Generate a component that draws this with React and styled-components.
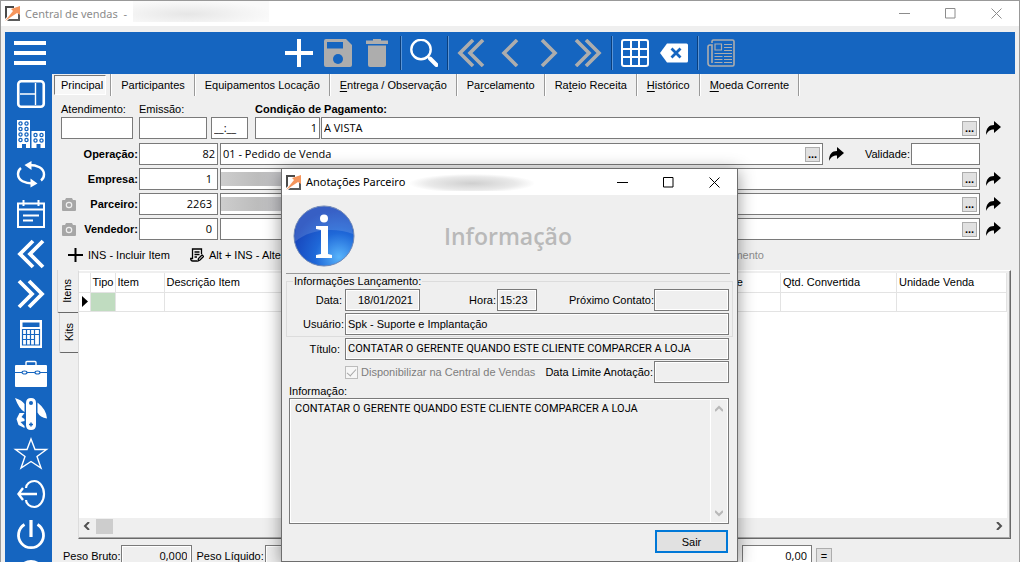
import React, { useState } from 'react';
import styled, { createGlobalStyle } from 'styled-components';

const GlobalStyle = createGlobalStyle`
  * {
    box-sizing: border-box;
  }

  body {
    margin: 0;
    overflow: hidden;
    background: #efefef;
    color: #000;
    font: 11px/14px 'Liberation Sans', Arial, sans-serif;
  }

  button,
  input,
  textarea {
    font: inherit;
    color: inherit;
    border-radius: 0;
  }

  svg {
    display: block;
  }
`;

const Window = styled.main`
  display: flex;
  flex-direction: column;
  position: relative;
  height: 100vh;
  overflow: hidden;
  border: 1px solid #999;
  border-bottom: 0;
  padding: 0 4px;
`;

const TitleBar = styled.header`
  display: flex;
  align-items: center;
  flex: none;
  height: ${(p) => (p.$main ? 25 : 26)}px;
  margin: ${(p) => (p.$main ? '0 -4px 6px' : '0')};
  padding-left: 3px;
  background: #fff;
  color: ${(p) => (p.$main ? '#8c8c8c' : '#000')};
  font: 11px/16px 'Noto Sans', 'Open Sans', sans-serif;
`;

const TitleText = styled.h1`
  margin: 0 0 0 4px;
  font: inherit;
  white-space: pre;
`;

const Smudge = styled.span`
  flex: none;
  align-self: ${(p) => (p.$top ? 'flex-start' : 'center')};
  width: ${(p) => p.$width}px;
  height: ${(p) => p.$height}px;
  margin-left: ${(p) => p.$gap || 0}px;
  background: ${(p) => p.$fill};
`;

const WindowControls = styled.div`
  display: flex;
  margin-left: auto;
`;

const ControlButton = styled.button`
  display: grid;
  place-items: center;
  width: 46px;
  height: 24px;
  padding: 0;
  border: 0;
  background: none;
`;

const Toolbar = styled.nav`
  display: grid;
  grid-template-columns: 1fr auto 1fr;
  align-items: center;
  flex: none;
  height: 42px;
  background: #1565c0;
  color: #fff;
`;

const ToolGroup = styled.div`
  display: flex;
  align-items: center;
`;

const ToolButton = styled.button`
  display: grid;
  place-items: center;
  width: ${(p) => (p.$menu ? 50 : 39)}px;
  height: 40px;
  padding: 0;
  border: 0;
  background: none;
  color: ${(p) => (p.disabled ? '#adadad' : '#fff')};
`;

const ToolDivider = styled.span`
  width: 2px;
  height: 34px;
  margin: 0 3px;
  background: #0b3f7c;
  border-right: 1px solid #5b95d6;
`;

const Body = styled.div`
  display: flex;
  flex: 1;
  min-height: 0;
`;

const Sidebar = styled.nav`
  display: flex;
  flex-direction: column;
  flex: none;
  width: 47px;
  overflow: hidden;
  background: #1565c0;
`;

const SideButton = styled.button`
  display: grid;
  place-items: center;
  flex: none;
  width: 52px;
  height: 40px;
  padding: 0;
  border: 0;
  background: none;
  color: #fff;
`;

const Content = styled.section`
  display: flex;
  flex-direction: column;
  flex: 1;
  min-width: 0;
`;

const Tabs = styled.div`
  display: flex;
  flex: none;
  height: 22px;
  padding-left: 2px;
`;

const Tab = styled.button`
  height: 22px;
  padding: 0 9px 1px 10px;
  border: 0;
  border-right: 1px solid #999;
  box-shadow: 1px 0 #fff;
  background: none;
  white-space: nowrap;

  u {
    text-underline-offset: 2px;
  }
`;

const ActiveTab = styled.div`
  height: 22px;
  padding: 1px 4px 0 0;
  border-right: 1px solid #999;
  box-shadow: 1px 0 #fff;

  button {
    height: 20px;
    padding: 0 2px 0 6px;
    border: 1px solid;
    border-color: #777 #fff #fff #777;
    background: #f7f7f7;
  }
`;

const Form = styled.form`
  display: flex;
  flex-direction: column;
  flex: none;
  gap: 3px;
  padding: 4px 9px 0 5px;
`;

const HeadRow = styled.div`
  display: flex;
  align-items: flex-end;
  margin-bottom: 1px;
  padding-left: 4px;
`;

const Group = styled.div`
  display: flex;
  flex-direction: column;
  flex: ${(p) => (p.$grow ? '1' : 'none')};
  width: ${(p) => (p.$width ? `${p.$width}px` : 'auto')};
  margin-right: ${(p) => p.$gap || 0}px;
`;

const Row = styled.div`
  display: flex;
  align-items: center;
`;

const TopLabel = styled.label`
  height: 17px;
  padding-top: 2px;
  font-weight: ${(p) => (p.$bold ? 'bold' : 'normal')};
  white-space: nowrap;
`;

const SideLabel = styled.div`
  display: flex;
  align-items: center;
  justify-content: space-between;
  flex: none;
  width: ${(p) => p.$width || 82}px;
  padding: 0 1px 0 5px;
  font-weight: ${(p) => (p.$light ? 'normal' : 'bold')};
  white-space: nowrap;

  label {
    margin-left: auto;
  }
`;

const fieldFonts = {
  main: "'Open Sans', 'Noto Sans', sans-serif",
  plain: 'inherit',
  narrow: 'Roboto, sans-serif',
};

const Input = styled.input`
  flex: ${(p) => (p.$width ? 'none' : '1')};
  width: ${(p) => (p.$width ? `${p.$width}px` : 'auto')};
  min-width: 0;
  height: 22px;
  margin-right: ${(p) => p.$gap || 0}px;
  padding: 0 ${(p) => p.$end || 2}px 1px 2px;
  border: 1px solid #7a7a7a;
  outline: 0;
  background: ${(p) => (p.$flat ? '#efefef' : '#fff')};
  box-shadow: inset 0 0 0 1px #fff;
  text-align: ${(p) => p.$align || 'left'};
  font-family: ${(p) => fieldFonts[p.$face || 'main']};
`;

const LookupBox = styled.div`
  display: flex;
  align-items: center;
  flex: 1;
  min-width: 0;
  height: 22px;
  padding-right: 2px;
  border: 1px solid #7a7a7a;
  background: #fff;

  input {
    height: 18px;
    border: 0;
    box-shadow: none;
  }
`;

const DotsButton = styled.button`
  flex: none;
  width: 15px;
  height: 15px;
  padding: 0;
  border: 1px solid #adadad;
  background: #e1e1e1;
  font-weight: bold;
  line-height: 12px;
`;

const ShareButton = styled.button`
  display: grid;
  place-items: center;
  flex: none;
  width: 26px;
  height: 22px;
  padding: 0;
  border: 0;
  background: none;
`;

const ShareSpace = styled.span`
  width: 26px;
`;

const Actions = styled.div`
  display: grid;
  grid-template-columns: 122px 1fr auto;
  align-items: center;
  flex: none;
  height: 30px;
  padding: 0 251px 0 16px;
`;

const ActionButton = styled.button`
  display: flex;
  align-items: center;
  gap: 5px;
  padding: 0;
  border: 0;
  background: none;
  color: ${(p) => (p.disabled ? '#8c8c8c' : '#000')};
  white-space: nowrap;
`;

const GridArea = styled.div`
  display: flex;
  flex: none;
  height: 269px;
  padding: 0 4px 0 5px;
`;

const VerticalTabs = styled.div`
  display: flex;
  flex-direction: column;
  align-items: flex-end;
  width: 21px;
`;

const VerticalTab = styled.button`
  width: ${(p) => (p.$active ? 21 : 19)}px;
  height: ${(p) => (p.$active ? 43 : 40)}px;
  padding: 6px 2px;
  border: 0;
  border-left: 1px solid #d8d8d8;
  border-bottom: 1px solid #696969;
  border-radius: 0 0 0 2px;
  background: none;
  text-align: left;

  span {
    display: block;
    writing-mode: vertical-rl;
    transform: rotate(180deg);
  }
`;

const GridPanel = styled.div`
  display: flex;
  flex-direction: column;
  flex: 1;
  min-width: 0;
  padding: 2px 2px 0 0;
  border: 1px solid;
  border-color: #fff #696969 #696969 #dcdcdc;
  box-shadow: inset -1px -1px #a8a8a8;
`;

const TableWrap = styled.div`
  flex: 1;
  margin-right: 1px;
  overflow: hidden;
  background: #fff;
`;

const Table = styled.table`
  width: 100%;
  border-collapse: collapse;
  table-layout: fixed;

  th,
  td {
    height: 19px;
    padding: 0 2px;
    border: 1px solid #e3e3e3;
    border-width: 0 1px 1px 0;
    font-weight: normal;
    text-align: left;
    white-space: nowrap;
  }

  th:first-child,
  td:first-child {
    padding: 0;
  }
`;

const TypeCell = styled.td`
  background: #c0dcc0;
`;

const HScroll = styled.div`
  display: flex;
  align-items: center;
  height: 20px;
  padding: 0 5px 4px 4px;
  color: #505050;
`;

const HThumb = styled.span`
  width: 17px;
  height: 15px;
  margin: 0 auto 0 5px;
  background: #cdcdcd;
`;

const Footer = styled.footer`
  display: flex;
  align-items: center;
  flex: none;
  height: 22px;
  margin-top: 6px;
  padding: 0 183px 0 11px;

  label {
    padding-right: 1px;
  }
`;

const FooterTotal = styled.div`
  display: flex;
  align-items: center;
  margin-left: auto;
  gap: 4px;
`;

const EqualButton = styled.button`
  width: 16px;
  height: 16px;
  padding: 0;
  border: 1px solid #adadad;
  background: #e1e1e1;
  line-height: 12px;
`;

/* Partner notes dialog */

const Dialog = styled.section`
  position: absolute;
  top: 167px;
  left: calc(50% - 229px);
  width: 457px;
  border: 1px solid #6e6e6e;
  background: #efefef;
  box-shadow: 0 3px 16px rgba(0, 0, 0, 0.42);
`;

const DialogHead = styled.div`
  display: grid;
  grid-template-columns: 62px 1fr 62px;
  align-items: center;
  height: 79px;
  margin: 0 7px 1px 4px;
  padding: 4px 7px 0;
  border-bottom: 1px solid #999;
`;

const Heading = styled.h2`
  margin: 0;
  color: #b9b9b9;
  font: 600 23px/28px 'Open Sans', 'Noto Sans', sans-serif;
  text-align: center;
`;

const Fieldset = styled.fieldset`
  display: flex;
  flex-direction: column;
  gap: 2px;
  min-width: 0;
  margin: 0 4px 1px;
  padding: 2px 3px 1px 0;
  border: 1px solid #dcdcdc;

  legend {
    margin-left: 6px;
    padding: 0 1px;
    line-height: 12px;
  }
`;

const DialogRow = styled.div`
  display: flex;
  align-items: center;
  margin: 0 ${(p) => (p.$outer ? 8 : 0)}px ${(p) => (p.$outer ? 1 : 0)}px ${(p) => (p.$outer ? 5 : 0)}px;
`;

const FieldLabel = styled.label`
  flex: ${(p) => (p.$width ? 'none' : '1')};
  width: ${(p) => (p.$width ? `${p.$width}px` : 'auto')};
  padding-right: ${(p) => p.$end || 0}px;
  text-align: right;
  white-space: nowrap;
`;

const CheckLabel = styled.label`
  display: flex;
  align-items: center;
  gap: 3px;
  margin-left: 58px;
  color: #7d7d7d;
  white-space: nowrap;

  input {
    appearance: none;
    position: relative;
    width: 13px;
    height: 13px;
    margin: 0;
    border: 1px solid #bcbcbc;
    background: #f6f6f6;
  }

  input:checked::after {
    content: '';
    position: absolute;
    left: 3px;
    top: 0;
    width: 4px;
    height: 8px;
    border: solid #a8a8a8;
    border-width: 0 1px 1px 0;
    transform: rotate(42deg);
  }
`;

const MemoLabel = styled.label`
  display: block;
  margin-left: 7px;
`;

const Memo = styled.div`
  display: flex;
  height: 126px;
  margin: 0 8px 6px 7px;
  border: 1px solid #7a7a7a;
  box-shadow: inset 0 0 0 1px #fff;

  textarea {
    flex: 1;
    padding: 3px 5px;
    border: 0;
    outline: 0;
    resize: none;
    background: none;
    font-family: ${fieldFonts.narrow};
  }
`;

const VScroll = styled.div`
  display: flex;
  flex-direction: column;
  align-items: center;
  justify-content: space-between;
  width: 18px;
  padding: 6px 2px 6px 0;
  border-left: 1px solid #fff;
  color: #b8b8b8;
`;

const CloseButton = styled.button`
  display: block;
  width: 73px;
  height: 23px;
  margin: 0 9px 8px auto;
  padding: 0;
  border: 2px solid #0078d7;
  background: #e1e1e1;
`;

const Icon = ({ size = 28, children, ...rest }) => (
  <svg width={size} height={size} viewBox="0 0 28 28" fill="none" stroke="currentColor" strokeWidth="2" {...rest}>
    {children}
  </svg>
);

const toolIcons = {
  add: <path d="M14 0v28M0 14h28" strokeWidth="4" />,
  save: (
    <>
      <path d="M2 0h20l6 6v20a2 2 0 0 1-2 2H2a2 2 0 0 1-2-2V2a2 2 0 0 1 2-2z" fill="currentColor" stroke="none" />
      <path d="M3 3h16v6.500H3z" fill="#1565c0" stroke="none" />
      <circle cx="14" cy="20" r="5" fill="#1565c0" stroke="none" />
    </>
  ),
  trash: (
    <path d="M10 0h8v1.500h7V5H3V1.500h7zM5 6.500h18V26a2 2 0 0 1-2 2H7a2 2 0 0 1-2-2z" fill="currentColor" stroke="none" />
  ),
  search: (
    <>
      <circle cx="11" cy="10.500" r="9.700" strokeWidth="2.400" />
      <path d="M18 17.500l3 3" />
      <path d="M20 19.500l6.500 6.500" strokeWidth="4" strokeLinecap="round" />
    </>
  ),
  first: <path d="M16 1L3 14l13 13M26 1L13 14l13 13" strokeWidth="3.600" />,
  prev: <path d="M21 1L8 14l13 13" strokeWidth="3.600" />,
  next: <path d="M7 1l13 13L7 27" strokeWidth="3.600" />,
  last: <path d="M2 1l13 13L2 27M12 1l13 13-13 13" strokeWidth="3.600" />,
  table: (
    <>
      <rect x="1" y="1" width="26" height="26" rx="2" />
      <path d="M10 1v26M18 1v26M1 10h26M1 18h26" />
    </>
  ),
  erase: (
    <>
      <path d="M0 14L7 4.500h19.500Q28 4.500 28 6v16q0 1.500-1.500 1.500H7z" fill="currentColor" stroke="none" />
      <path d="M11.500 9.500l9 9M20.500 9.500l-9 9" stroke="#1565c0" strokeWidth="2.800" />
    </>
  ),
  news: (
    <>
      <path d="M5 4V2.500Q5 1 6.500 1h19Q27 1 27 2.500v23q0 1.500-1.500 1.500H4q-3 0-3-3V8q0-2 2-2h2v18" strokeWidth="1.600" />
      <path d="M8 5h6.500v6H8zM17 5.500h8M17 8.500h8M17 11.500h8M7.500 14.500H25M7.500 17.500h8M17 17.500h8M7.500 20.500h8M17 20.500h8M7.500 23.500h8M17 23.500h8" strokeWidth="1.200" />
    </>
  ),
};

const sideIcons = {
  layout: (
    <>
      <rect x="1.250" y="1.250" width="25.500" height="25.500" rx="3" strokeWidth="2.600" />
      <path d="M3 14h15.500M18.500 3v22" strokeWidth="1.400" />
    </>
  ),
  building: (
    <>
      <path d="M0 0h13v28H9v-4H5v4H0zM14.500 11H28v17h-4.500v-4h-4v4h-5z" fill="currentColor" stroke="none" />
      <g stroke="#1565c0" strokeWidth="1.300">
        {[3.5, 9, 14.5, 20].map((y) => (
          <React.Fragment key={y}>
            <circle cx="3.500" cy={y} r="1.600" />
            <circle cx="9.500" cy={y} r="1.600" />
          </React.Fragment>
        ))}
        <circle cx="18.500" cy="15" r="1.600" />
        <circle cx="24.500" cy="15" r="1.600" />
        <circle cx="18.500" cy="20.500" r="1.600" />
        <circle cx="24.500" cy="20.500" r="1.600" />
      </g>
    </>
  ),
  refresh: (
    <>
      <path d="M12 5c8 0 15 3 15 9.500 0 2.500-1 4.500-3 6M16 23.500C8 23.500 1 20.500 1 14c0-2.500 1-4.500 3-6" strokeWidth="2.400" />
      <path d="M14.500 1v9L7.500 5zM13.500 27.500v-9l7 5z" fill="currentColor" stroke="none" />
    </>
  ),
  agenda: (
    <>
      <path d="M1 3.500h26v23.500H1zM1 9.500h26" />
      <path d="M6.500 0v6M21.500 0v6M6 15.500h16M6 20.500h10" />
    </>
  ),
  back: <path d="M16 1L3 14l13 13M26 1L13 14l13 13" strokeWidth="3.800" />,
  forward: <path d="M2 1l13 13L2 27M12 1l13 13-13 13" strokeWidth="3.800" />,
  calculator: (
    <>
      <path d="M3 0h22v28H3z" fill="currentColor" stroke="none" />
      <path d="M5.500 2.500h17v4.500h-17z" fill="#1565c0" stroke="none" />
      <path d="M5.500 9.500h17v15.500h-17zM5.500 14.500h17M5.500 19.500h12M9.500 9.500V25M13.500 9.500V25M17.500 9.500V25" stroke="#1565c0" strokeWidth="1.200" />
    </>
  ),
  briefcase: (
    <>
      <path d="M-1 5h30q1 0 1 1v20q0 1-1 1H-1q-1 0-1-1V6q0-1 1-1z" fill="currentColor" stroke="none" />
      <path d="M9 5V2.500Q9 1.500 10 1.500h8q1 0 1 1V5" strokeWidth="1.400" />
      <path d="M-2 12.500H5m5 0h8m5 0h7" stroke="#1565c0" strokeWidth="1.200" />
      <ellipse cx="7.500" cy="12.500" rx="2.500" ry="1.500" stroke="#1565c0" strokeWidth="1.200" />
      <ellipse cx="20.500" cy="12.500" rx="2.500" ry="1.500" stroke="#1565c0" strokeWidth="1.200" />
    </>
  ),
  knife: (
    <>
      <path d="M9 3q0-5 5-5t5 5v22q0 5-5 5t-5-5zM-2-2Q5 0 7.500 4v8Q2 9-2-2zM20.500 2.500q9 7 9.500 16-7-1-9.500-6zM7.500 13l-3 4 3 2v2l-4 1 4 4v2l-6-3-2-6 3-6z" fill="currentColor" stroke="none" />
      <circle cx="14" cy="3" r="2" fill="#1565c0" stroke="none" />
      <path d="M12 24.500h4M14 22.500v4" stroke="#1565c0" strokeWidth="1.500" />
    </>
  ),
  star: <path d="M14-1l4 10.500h11.500L20 16.500l4 11.500-10-6.500L4 28l4-11.500-9.500-7H10z" strokeWidth="1.400" />,
  logout: (
    <>
      <path d="M9 8c0-4 4-7 8.500-7S27 6.500 27 14s-5 13-9.500 13S9 24 9 20" strokeWidth="2.200" />
      <path d="M20 14H1.500M6 8l-4.500 6L6 20" strokeWidth="2.400" />
    </>
  ),
  power: (
    <>
      <path d="M14 0v17" strokeWidth="3.200" />
      <path d="M7.500 4.500a12.500 12.500 0 1 0 13 0" strokeWidth="2.800" />
    </>
  ),
  info: <circle cx="14" cy="14" r="13" />,
};

const toolItems = [
  ['add', 'Incluir'],
  ['save', 'Salvar', true],
  ['trash', 'Excluir', true],
  null,
  ['search', 'Pesquisar'],
  null,
  ['first', 'Primeiro', true],
  ['prev', 'Anterior', true],
  ['next', 'Próximo', true],
  ['last', 'Último', true],
  null,
  ['table', 'Tabela'],
  ['erase', 'Limpar'],
  null,
  ['news', 'Relatório', true],
];

const LogoIcon = () => (
  <svg width="17" height="17" viewBox="0 0 17 17">
    <path d="M1 1h9v2H3v9l-2 2z" fill="#4a4a4a" />
    <path d="M16 8v8H3l2-2h9V9z" fill="#5b5b5b" />
    <path d="M1 16L9 6 7 4l9-3v9l-3-2z" fill="#f5955c" />
  </svg>
);

const ShareIcon = () => (
  <svg width="15" height="15" viewBox="0 0 15 15">
    <path d="M0 14C0 7 3 4 8 4V0l7 6-7 6V8.500C4 8.500 2 10 0 14z" fill="#000" />
  </svg>
);

const CameraIcon = () => (
  <svg width="14" height="13" viewBox="0 0 14 13">
    <path d="M4 0h6l1 2h2q1 0 1 1v9q0 1-1 1H1q-1 0-1-1V3q0-1 1-1h2z" fill="#a6a6a6" />
    <circle cx="7" cy="7" r="2.700" fill="none" stroke="#efefef" strokeWidth="1.200" />
  </svg>
);

const Arrow = ({ d }) => (
  <svg width="8" height="8" viewBox="0 0 8 8" fill="none" stroke="currentColor" strokeWidth="2">
    <path d={d} />
  </svg>
);

const InfoIcon = () => (
  <svg width="62" height="62" viewBox="0 0 62 62">
    <defs>
      <radialGradient id="infoFill" cx="0.75" cy="0.85" r="0.8">
        <stop offset="0" stopColor="#58b4fb" />
        <stop offset="0.5" stopColor="#1f68d8" />
        <stop offset="1" stopColor="#1745bb" />
      </radialGradient>
    </defs>
    <circle cx="31" cy="31" r="30" fill="url(#infoFill)" stroke="#6f87b5" />
    <path d="M2 31a29 29 0 0 1 58-2C42 22 16 24 2 37z" fill="#fff" opacity="0.140" />
    <circle cx="31" cy="13.500" r="4" fill="#fff" />
    <path d="M23 21h12v28l4 1v3H23v-3l5-1V25l-5-1z" fill="#fff" />
  </svg>
);

const Controls = () => (
  <WindowControls>
    <ControlButton aria-label="Minimizar">
      <svg width="11" height="11" stroke="currentColor"><path d="M0 5.500h11" /></svg>
    </ControlButton>
    <ControlButton aria-label="Maximizar">
      <svg width="11" height="11" stroke="currentColor" fill="none"><path d="M.5.500h9.500v9.500H.500z" /></svg>
    </ControlButton>
    <ControlButton aria-label="Fechar">
      <svg width="11" height="11" stroke="currentColor"><path d="M.5.500l10 10M10.500.500l-10 10" /></svg>
    </ControlButton>
  </WindowControls>
);

const Lookup = ({ id, label, value, smudge }) => (
  <LookupBox>
    {smudge && <Smudge $width={62} $height={14} $fill="linear-gradient(90deg, #cdcdcd, #bcbcbc 60%, #c6c6ca)" />}
    <Input id={id} aria-label={label} defaultValue={value} />
    <DotsButton type="button" aria-label={`Buscar ${label}`}>...</DotsButton>
  </LookupBox>
);

const Share = ({ label }) => (
  <ShareButton type="button" aria-label={`Abrir ${label}`}>
    <ShareIcon />
  </ShareButton>
);

const NotesDialog = ({ onClose }) => (
  <Dialog role="dialog" aria-labelledby="notesTitle">
    <TitleBar>
      <LogoIcon />
      <TitleText id="notesTitle">Anotações Parceiro</TitleText>
      <Smudge $width={124} $height={17} $gap={5} $fill="radial-gradient(ellipse at 50% 55%, #cfcfcf, #e9e9e9 50%, #fff 72%)" />
      <Controls />
    </TitleBar>
    <DialogHead>
      <InfoIcon />
      <Heading>Informação</Heading>
    </DialogHead>
    <Fieldset>
      <legend>Informações Lançamento:</legend>
      <DialogRow>
        <FieldLabel $width={58} $end={3} htmlFor="data">Data:</FieldLabel>
        <Input id="data" $width={75} $end={6} $flat $face="plain" $align="right" defaultValue="18/01/2021" readOnly />
        <FieldLabel $width={77} $end={1} htmlFor="hora">Hora:</FieldLabel>
        <Input id="hora" $width={40} $flat $face="plain" defaultValue="15:23" readOnly />
        <FieldLabel htmlFor="contato">Próximo Contato:</FieldLabel>
        <Input id="contato" $width={75} $flat $face="plain" readOnly />
      </DialogRow>
      <DialogRow>
        <FieldLabel $width={58} $end={1} htmlFor="usuario">Usuário:</FieldLabel>
        <Input id="usuario" $flat $face="plain" defaultValue="Spk - Suporte e Implantação" readOnly />
      </DialogRow>
    </Fieldset>
    <DialogRow $outer>
      <FieldLabel $width={58} $end={5} htmlFor="titulo">Título:</FieldLabel>
      <Input id="titulo" $flat $face="narrow" defaultValue="CONTATAR O GERENTE QUANDO ESTE CLIENTE COMPARCER A LOJA" readOnly />
    </DialogRow>
    <DialogRow $outer>
      <CheckLabel>
        <input type="checkbox" defaultChecked disabled />
        Disponibilizar na Central de Vendas
      </CheckLabel>
      <FieldLabel $end={1} htmlFor="limite">Data Limite Anotação:</FieldLabel>
      <Input id="limite" $width={75} $flat $face="plain" readOnly />
    </DialogRow>
    <MemoLabel htmlFor="memo">Informação:</MemoLabel>
    <Memo>
      <textarea id="memo" readOnly defaultValue="CONTATAR O GERENTE QUANDO ESTE CLIENTE COMPARCER A LOJA" />
      <VScroll>
        <Arrow d="M0 6l4-4 4 4" />
        <Arrow d="M0 2l4 4 4-4" />
      </VScroll>
    </Memo>
    <CloseButton onClick={onClose}>Sair</CloseButton>
  </Dialog>
);

const App = () => {
  const [showNotes, setShowNotes] = useState(true);

  return (
    <Window>
      <GlobalStyle />
      <TitleBar $main>
        <LogoIcon />
        <TitleText>{'Central de vendas  -'}</TitleText>
        <Smudge $top $width={136} $height={21} $gap={6} $fill="radial-gradient(ellipse at 40% 62%, #e6e6e6, #f4f4f4 50%, #fafafa 75%)" />
        <Controls />
      </TitleBar>

      <Toolbar>
        <ToolButton $menu aria-label="Menu">
          <svg width="32" height="24" stroke="currentColor" strokeWidth="4">
            <path d="M0 2h32M0 12h32M0 22h32" />
          </svg>
        </ToolButton>
        <ToolGroup>
          {toolItems.map((item, i) =>
            item ? (
              <ToolButton key={item[0]} aria-label={item[1]} disabled={item[2]}>
                <Icon>{toolIcons[item[0]]}</Icon>
              </ToolButton>
            ) : (
              <ToolDivider key={i} />
            )
          )}
        </ToolGroup>
      </Toolbar>

      <Body>
        <Sidebar>
          {Object.keys(sideIcons).map((name) => (
            <SideButton key={name} aria-label={name}>
              <Icon overflow="visible">{sideIcons[name]}</Icon>
            </SideButton>
          ))}
        </Sidebar>

        <Content>
          <Tabs>
            <ActiveTab><button>Principal</button></ActiveTab>
            <Tab>Participantes</Tab>
            <Tab>Equipamentos Locação</Tab>
            <Tab><u>E</u>ntrega / Observação</Tab>
            <Tab>Pa<u>r</u>celamento</Tab>
            <Tab>Ra<u>t</u>eio Receita</Tab>
            <Tab><u>H</u>istórico</Tab>
            <Tab><u>M</u>oeda Corrente</Tab>
          </Tabs>

          <Form onSubmit={(e) => e.preventDefault()}>
            <HeadRow>
              <Group $width={72} $gap={6}>
                <TopLabel htmlFor="atendimento">Atendimento:</TopLabel>
                <Row><Input id="atendimento" $width={72} /></Row>
              </Group>
              <Group $width={68} $gap={4}>
                <TopLabel htmlFor="emissao">Emissão:</TopLabel>
                <Row><Input id="emissao" $width={68} /></Row>
              </Group>
              <Input $width={37} $gap={7} aria-label="Hora de emissão" defaultValue="__:__" />
              <Group $grow>
                <TopLabel $bold htmlFor="condicao">Condição de Pagamento:</TopLabel>
                <Row>
                  <Input id="condicao" $width={65} $gap={1} $align="right" defaultValue="1" />
                  <Lookup label="Condição" value="A VISTA" />
                  <Share label="Condição" />
                </Row>
              </Group>
            </HeadRow>
            <Row>
              <SideLabel><label htmlFor="operacao">Operação:</label></SideLabel>
              <Input id="operacao" $width={79} $gap={2} $align="right" defaultValue="82" />
              <Lookup label="Operação" value="01 - Pedido de Venda" />
              <Share label="Operação" />
              <SideLabel $light $width={62}><label htmlFor="validade">Validade:</label></SideLabel>
              <Input id="validade" $width={69} />
              <ShareSpace />
            </Row>
            <Row>
              <SideLabel><label htmlFor="empresa">Empresa:</label></SideLabel>
              <Input id="empresa" $width={79} $gap={2} $end={5} $align="right" defaultValue="1" />
              <Lookup label="Empresa" smudge />
              <Share label="Empresa" />
            </Row>
            <Row>
              <SideLabel><CameraIcon /><label htmlFor="parceiro">Parceiro:</label></SideLabel>
              <Input id="parceiro" $width={79} $gap={2} $end={5} $align="right" defaultValue="2263" />
              <Lookup label="Parceiro" smudge />
              <Share label="Parceiro" />
            </Row>
            <Row>
              <SideLabel><CameraIcon /><label htmlFor="vendedor">Vendedor:</label></SideLabel>
              <Input id="vendedor" $width={79} $gap={2} $end={5} $align="right" defaultValue="0" />
              <Lookup label="Vendedor" />
              <Share label="Vendedor" />
            </Row>
          </Form>

          <Actions>
            <ActionButton>
              <svg width="15" height="14" stroke="#000" strokeWidth="2"><path d="M7.500 0v14M0 7h15" /></svg>
              INS - Incluir Item
            </ActionButton>
            <ActionButton>
              <svg width="14" height="14" fill="none" stroke="#000" strokeWidth="1.300">
                <path d="M11.500 6V1h-9v9.500H.700q0 2.500 2 2.500H7M4.500 4h5M4.500 6.500h5M4.500 9H7" />
                <path d="M8 13l.500-2.500L12 7l1.500 1.500L10 12z" />
              </svg>
              Alt + INS - Alterar Item
            </ActionButton>
            <ActionButton disabled>Faturamento</ActionButton>
          </Actions>

          <GridArea>
            <VerticalTabs>
              <VerticalTab $active><span>Itens</span></VerticalTab>
              <VerticalTab><span>Kits</span></VerticalTab>
            </VerticalTabs>
            <GridPanel>
              <TableWrap>
                <Table>
                  <colgroup>
                    <col width="11" />
                    <col width="25" />
                    <col width="49" />
                    <col />
                    <col width="97" />
                    <col width="116" />
                    <col width="110" />
                  </colgroup>
                  <thead>
                    <tr>
                      <th aria-label="Linha" />
                      <th>Tipo</th>
                      <th>Item</th>
                      <th>Descrição Item</th>
                      <th>Quantidade</th>
                      <th>Qtd. Convertida</th>
                      <th>Unidade Venda</th>
                    </tr>
                  </thead>
                  <tbody>
                    <tr>
                      <td>
                        <svg width="10" height="11"><path d="M3 0l6 5.500L3 11z" /></svg>
                      </td>
                      <TypeCell />
                      <td />
                      <td />
                      <td />
                      <td />
                      <td />
                    </tr>
                  </tbody>
                </Table>
              </TableWrap>
              <HScroll>
                <Arrow d="M6 0L2 4l4 4" />
                <HThumb />
                <Arrow d="M2 0l4 4-4 4" />
              </HScroll>
            </GridPanel>
          </GridArea>

          <Footer>
            <label htmlFor="bruto">Peso Bruto:</label>
            <Input id="bruto" $width={71} $gap={4} $end={4} $flat $align="right" defaultValue="0,000" />
            <label htmlFor="liquido">Peso Líquido:</label>
            <Input id="liquido" $width={71} $end={4} $flat $align="right" defaultValue="0,000" />
            <FooterTotal>
              <Input $width={70} $end={4} $align="right" aria-label="Total" defaultValue="0,00" />
              <EqualButton aria-label="Calcular">=</EqualButton>
            </FooterTotal>
          </Footer>
        </Content>
      </Body>

      {showNotes && <NotesDialog onClose={() => setShowNotes(false)} />}
    </Window>
  );
};

export default App;
